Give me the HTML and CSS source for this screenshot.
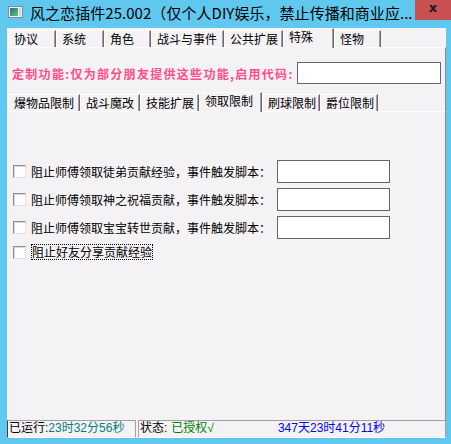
FILE: index.html
```html
<!DOCTYPE html>
<html lang="zh-CN">
<head>
<meta charset="utf-8">
<link rel="stylesheet" href="styles.css">
</head>
<body>
<div class="window">
  <div class="titlebar">
    <svg class="appicon" width="15" height="12" viewBox="0 0 15 12">
      <defs>
        <linearGradient id="g" x1="0" y1="0" x2="1" y2="1">
          <stop offset="0" stop-color="#2d6c93"/>
          <stop offset="0.5" stop-color="#3f9a7e"/>
          <stop offset="1" stop-color="#7cbf6a"/>
        </linearGradient>
      </defs>
      <rect x="0.5" y="0.5" width="14" height="11" fill="#eef2f4" stroke="#808a90"/>
      <rect x="2" y="2" width="8" height="8" fill="url(#g)"/>
      <rect x="11" y="2" width="2" height="8" fill="#c9d3d8"/>
    </svg>
    <span class="title">风之恋插件25.002（仅个人DIY娱乐，禁止传播和商业应...</span>
    <div class="close">x</div>
  </div>
  <div class="client">
    <div class="tabs">
      <div class="tab w48">协议</div>
      <div class="tab w48">系统</div>
      <div class="tab w47">角色</div>
      <div class="tab w73">战斗与事件</div>
      <div class="tab w59">公共扩展</div>
      <div class="tab sel w51">特殊</div>
      <div class="tab w47">怪物</div>
    </div>
    <div class="panel">
      <div class="code-row">
        <span class="code-label">定制功能:仅为部分朋友提供这些功能,启用代码:</span>
        <div class="textbox code-box"></div>
      </div>
      <div class="tabs sub">
        <div class="tab w72">爆物品限制</div>
        <div class="tab w60">战斗魔改</div>
        <div class="tab w59">技能扩展</div>
        <div class="tab sel w63">领取限制</div>
        <div class="tab w58">刷球限制</div>
        <div class="tab w58">爵位限制</div>
      </div>
      <div class="subpanel">
        <div class="opt">
          <span class="cb"></span>
          <span class="opt-label">阻止师傅领取徒弟贡献经验，事件触发脚本：</span>
          <div class="textbox script-box"></div>
        </div>
        <div class="opt">
          <span class="cb"></span>
          <span class="opt-label">阻止师傅领取神之祝福贡献，事件触发脚本：</span>
          <div class="textbox script-box"></div>
        </div>
        <div class="opt">
          <span class="cb"></span>
          <span class="opt-label">阻止师傅领取宝宝转世贡献，事件触发脚本：</span>
          <div class="textbox script-box"></div>
        </div>
        <div class="opt last">
          <span class="cb"></span>
          <span class="focus">阻止好友分享贡献经验</span>
        </div>
      </div>
    </div>
    <div class="statusbar">
      <div class="sb-panel first">已运行:<span class="teal">23时32分56秒</span></div>
      <div class="sb-panel second">状态:<span class="green">已授权√</span><span class="blue">347天23时41分11秒</span></div>
    </div>
  </div>
</div>
</body>
</html>
```

FILE: styles.css
```css
* { box-sizing: border-box; }
html, body {
  margin: 0;
  padding: 0;
  background: #60c8ee;
}
body {
  width: 451px;
  height: 444px;
  overflow: hidden;
  font-family: "Liberation Sans", "Noto Sans CJK SC", sans-serif;
  font-size: 12px;
  color: #000;
}
.window {
  width: 451px;
  height: 444px;
  background: #60c8ee;
  display: flex;
  flex-direction: column;
}
.titlebar {
  height: 28px;
  display: flex;
  align-items: flex-start;
  position: relative;
}
.appicon {
  margin: 6px 0 0 8px;
  flex: none;
}
.title {
  margin: 3px 0 0 7px;
  font-family: "Noto Sans CJK SC", sans-serif;
  font-size: 15px;
  line-height: 20px;
  white-space: nowrap;
  letter-spacing: 0.05px;
}
.close {
  position: absolute;
  right: 0;
  top: 0;
  width: 36px;
  height: 20px;
  background: #c75050;
  color: #1b1b1b;
  font-family: "DejaVu Sans", sans-serif;
  font-weight: bold;
  font-size: 13px;
  line-height: 16px;
  text-align: center;
}
.client {
  margin-left: 7px;
  width: 439px;
  height: 410px;
  background: #f5f2f5;
  display: flex;
  flex-direction: column;
}
.tabs {
  display: flex;
  align-items: flex-end;
  height: 19px;
  padding-left: 1px;
  flex: none;
}
.tabs.sub {
  margin-top: 8px;
}
.tab {
  height: 17px;
  border-top: 1px solid #ffffff;
  border-left: 1px solid #ffffff;
  border-right: 1px solid #696969;
  box-shadow: inset -1px 0 0 #a0a0a0;
  padding-left: 5px;
  line-height: 15px;
  font-family: "Noto Sans CJK SC", sans-serif;
  font-size: 12px;
  white-space: nowrap;
  flex: none;
  overflow: hidden;
}
.tab.sel {
  height: 20px;
  margin-bottom: -1px;
  background: #f5f2f5;
  position: relative;
  z-index: 1;
  line-height: 16px;
}
.w47 { width: 47px; }
.w48 { width: 48px; }
.w51 { width: 51px; }
.w58 { width: 58px; }
.w59 { width: 59px; }
.w60 { width: 60px; }
.w63 { width: 63px; }
.w72 { width: 72px; }
.w73 { width: 73px; }
.panel {
  border-top: 1px solid #ffffff;
  border-right: 1px solid #8c8c8c;
  flex: 1;
  display: flex;
  flex-direction: column;
}
.code-row {
  margin-top: 14px;
  height: 22px;
  display: flex;
  align-items: center;
  padding-left: 5px;
}
.code-label {
  width: 285px;
  color: #ff4d89;
  font-family: "Noto Sans CJK SC", sans-serif;
  font-weight: bold;
  font-size: 12px;
  letter-spacing: 1.3px;
  white-space: nowrap;
}
.textbox {
  background: #ffffff;
  border: 1px solid #666666;
}
.code-box {
  width: 144px;
  height: 22px;
}
.subpanel {
  border-top: 1px solid #ffffff;
  flex: 1;
  padding-top: 48px;
}
.opt {
  display: flex;
  align-items: center;
  height: 23px;
  padding-left: 6px;
  margin-bottom: 5px;
}
.opt.last {
  height: 16px;
  margin-top: 4px;
}
.cb {
  width: 13px;
  height: 13px;
  background: #ffffff;
  border: 1px solid;
  border-color: #8e8e8e #e2e2e2 #e2e2e2 #8e8e8e;
  box-shadow: inset 1px 1px 0 #d8d8d8;
  margin-right: 5px;
  flex: none;
}
.opt-label {
  width: 246px;
  font-family: "Noto Sans CJK SC", sans-serif;
  font-size: 12px;
  white-space: nowrap;
}
.script-box {
  width: 113px;
  height: 23px;
}
.focus {
  font-family: "Noto Sans CJK SC", sans-serif;
  font-size: 12px;
  border: 1px dotted #000;
  line-height: 14px;
  white-space: nowrap;
}
.statusbar {
  height: 18px;
  display: flex;
  flex: none;
  gap: 2px;
}
.sb-panel {
  height: 18px;
  border: 1px solid;
  border-color: #a0a0a0 #a0a0a0 #ffffff #a0a0a0;
  font-family: "Liberation Sans", "Noto Sans CJK SC", sans-serif;
  font-size: 12px;
  line-height: 15px;
  white-space: nowrap;
  padding-left: 1px;
}
.sb-panel.first {
  width: 129px;
  border-left-color: #404040;
}
.sb-panel.second {
  flex: 1;
}
.teal { color: #008080; }
.green { color: #008000; margin-left: 4px; }
.blue { color: #0000ff; margin-left: 64px; }
```
